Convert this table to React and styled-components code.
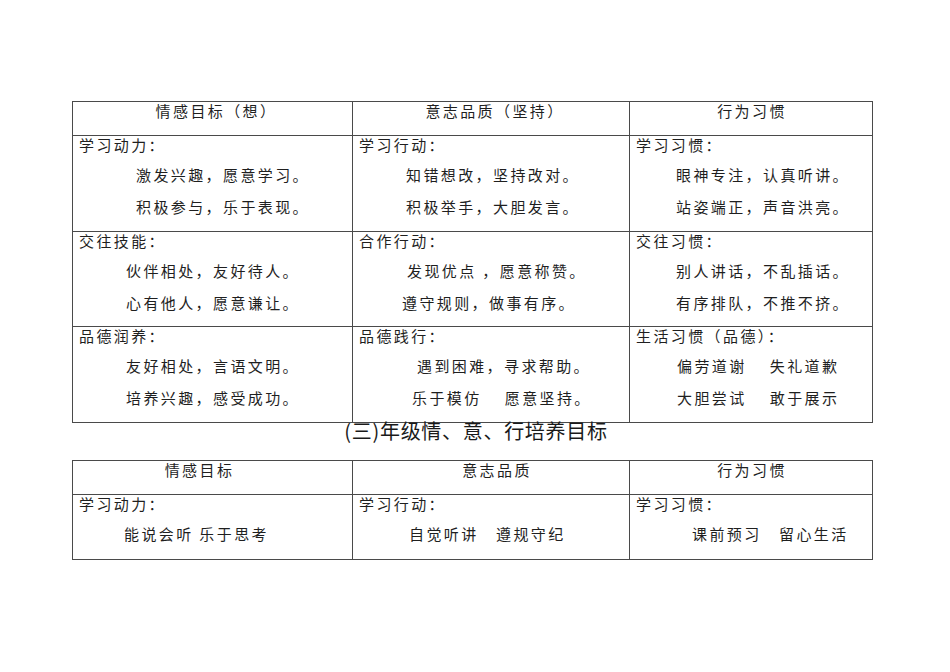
import React from "react";
import styled, { createGlobalStyle } from "styled-components";

const GlobalStyle = createGlobalStyle`
  html, body {
    margin: 0;
    padding: 0;
    background: #ffffff;
  }
  body {
    font-family: "Noto Sans CJK SC", "Noto Sans", sans-serif;
    color: #1f1f1f;
  }
`;

const Page = styled.div`
  width: 950px;
  min-height: 672px;
  box-sizing: border-box;
  padding: 101px 0 0 72px;
`;

const Sheet = styled.div`
  width: 801px;
  display: flex;
  flex-direction: column;
`;

const Table = styled.div`
  display: grid;
  grid-template-columns: 280px 277px 243px;
  grid-template-rows: ${(p) => p.$rows};
  border-top: 1px solid #4a4a4a;
  border-left: 1px solid #4a4a4a;
  margin-top: ${(p) => p.$top || 0}px;
`;

const Cell = styled.div`
  box-sizing: border-box;
  min-width: 0;
  border-right: 1px solid #4a4a4a;
  border-bottom: 1px solid #4a4a4a;
  font-size: 15px;
  letter-spacing: 2.4px;
  white-space: nowrap;
`;

const HeadCell = styled(Cell)`
  text-align: center;
  line-height: 18px;
  padding-left: ${(p) => Math.max(p.$shift || 0, 0) * 2}px;
  padding-right: ${(p) => Math.max(-(p.$shift || 0), 0) * 2}px;
`;

const BodyCell = styled(Cell)`
  display: flex;
  flex-direction: column;
  padding-left: 6px;
`;

const Label = styled.div`
  line-height: 18px;
  margin-bottom: 5px;
`;

const Line = styled.div`
  line-height: 32px;
  padding-left: ${(p) => p.$indent}px;
  white-space: pre;
`;

const Title = styled.div`
  height: 16px;
  line-height: 16px;
  font-size: 20px;
  letter-spacing: 0.7px;
  text-align: center;
  padding-left: 7px;
  white-space: nowrap;
  color: #1a1a1a;
`;

const gradeTable = {
  rows: "34px 96px 95px 96px",
  heads: [
    { text: "情感目标（想）", shift: 4 },
    { text: "意志品质（坚持）", shift: 4 },
    { text: "行为习惯", shift: 1 },
  ],
  body: [
    [
      { label: "学习动力：", indent: 57, lines: ["激发兴趣，愿意学习。", "积极参与，乐于表现。"] },
      { label: "学习行动：", indent: 47, lines: ["知错想改，坚持改对。", "积极举手，大胆发言。"] },
      { label: "学习习惯：", indent: 40, lines: ["眼神专注，认真听讲。", "站姿端正，声音洪亮。"] },
    ],
    [
      { label: "交往技能：", indent: 47, lines: ["伙伴相处，友好待人。", "心有他人，愿意谦让。"] },
      { label: "合作行动：", indent: [48, 43], lines: ["发现优点 ，愿意称赞。", "遵守规则，做事有序。"] },
      { label: "交往习惯：", indent: 40, lines: ["别人讲话，不乱插话。", "有序排队，不推不挤。"] },
    ],
    [
      { label: "品德润养：", indent: 47, lines: ["友好相处，言语文明。", "培养兴趣，感受成功。"] },
      { label: "品德践行：", indent: [58, 53], lines: ["遇到困难，寻求帮助。", "乐于模仿　 愿意坚持。"] },
      { label: "生活习惯（品德）：", indent: 41, lines: ["偏劳道谢　 失礼道歉", "大胆尝试　 敢于展示"] },
    ],
  ],
};

const thirdTable = {
  rows: "34px 65px",
  heads: [
    { text: "情感目标", shift: -13 },
    { text: "意志品质", shift: 6 },
    { text: "行为习惯", shift: 1 },
  ],
  body: [
    [
      { label: "学习动力：", indent: 45, lines: ["能说会听 乐于思考"] },
      { label: "学习行动：", indent: 50, lines: ["自觉听讲　遵规守纪"] },
      { label: "学习习惯：", indent: 56, lines: ["课前预习　留心生活"] },
    ],
  ],
};

const GoalTable = ({ data, top }) => (
  <Table $rows={data.rows} $top={top}>
    {data.heads.map((h) => (
      <HeadCell key={h.text} $shift={h.shift}>
        {h.text}
      </HeadCell>
    ))}
    {data.body.map((row, r) =>
      row.map((cell, c) => (
        <BodyCell key={`${r}-${c}`}>
          <Label>{cell.label}</Label>
          {cell.lines.map((line, i) => (
            <Line
              key={line}
              $indent={Array.isArray(cell.indent) ? cell.indent[i] : cell.indent}
            >
              {line}
            </Line>
          ))}
        </BodyCell>
      ))
    )}
  </Table>
);

const App = () => (
  <>
    <GlobalStyle />
    <Page>
      <Sheet>
        <GoalTable data={gradeTable} />
        <Title>(三)年级情、意、行培养目标</Title>
        <GoalTable data={thirdTable} top={21} />
      </Sheet>
    </Page>
  </>
);

export default App;
